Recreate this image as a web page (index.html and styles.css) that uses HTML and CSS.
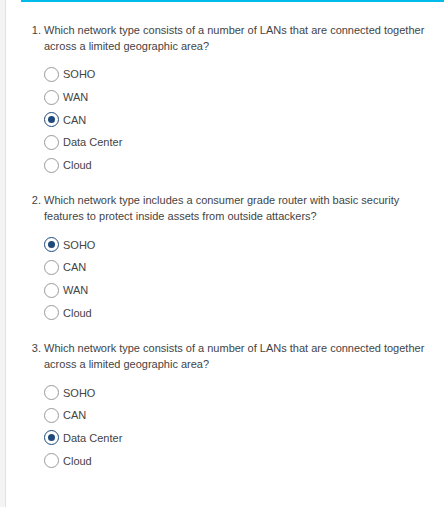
FILE: index.html
```html
<!DOCTYPE html>
<html>
<head>
<meta charset="utf-8">
<link rel="stylesheet" href="styles.css">
</head>
<body>
<div class="shell">
  <div class="rail"></div>
  <main class="panel">
    <ol class="quiz">
      <li class="question">
        <p class="prompt">Which network type consists of a number of LANs that are connected together across a limited geographic area?</p>
        <ul class="options">
          <li class="option"><span class="radio"></span>SOHO</li>
          <li class="option"><span class="radio"></span>WAN</li>
          <li class="option"><span class="radio checked"></span>CAN</li>
          <li class="option"><span class="radio"></span>Data Center</li>
          <li class="option"><span class="radio"></span>Cloud</li>
        </ul>
      </li>
      <li class="question">
        <p class="prompt">Which network type includes a consumer grade router with basic security features to protect inside assets from outside attackers?</p>
        <ul class="options">
          <li class="option"><span class="radio checked"></span>SOHO</li>
          <li class="option"><span class="radio"></span>CAN</li>
          <li class="option"><span class="radio"></span>WAN</li>
          <li class="option"><span class="radio"></span>Cloud</li>
        </ul>
      </li>
      <li class="question">
        <p class="prompt">Which network type consists of a number of LANs that are connected together across a limited geographic area?</p>
        <ul class="options">
          <li class="option"><span class="radio"></span>SOHO</li>
          <li class="option"><span class="radio"></span>CAN</li>
          <li class="option"><span class="radio checked"></span>Data Center</li>
          <li class="option"><span class="radio"></span>Cloud</li>
        </ul>
      </li>
    </ol>
  </main>
</div>
</body>
</html>
```

FILE: styles.css
```css
html, body {
  margin: 0;
  padding: 0;
  background: #ffffff;
}
body {
  font-family: "Liberation Sans", Arial, sans-serif;
  font-size: 11px;
  color: #444444;
}
.shell {
  display: flex;
  min-height: 507px;
}
.rail {
  width: 5px;
  background: #f4f4f4;
  border-right: 1px solid #e2e2e2;
  flex: none;
}
.panel {
  flex: 1;
  margin-left: 15px;
  border-top: 2px solid #00bceb;
}
.quiz {
  margin: 0;
  padding: 20px 12px 0 23px;
}
.question {
  margin-bottom: 16px;
}
.prompt {
  margin: 0;
  line-height: 16px;
}
.options {
  list-style: none;
  margin: 9px 0 0 0;
  padding: 0;
}
.option {
  display: flex;
  align-items: center;
  gap: 4px;
  height: 22.7px;
}
.radio {
  box-sizing: border-box;
  width: 15px;
  height: 15px;
  border: 1px solid #9a9a9a;
  border-radius: 50%;
  display: inline-flex;
  align-items: center;
  justify-content: center;
  flex: none;
}
.radio.checked {
  border: 1.5px solid #1d4a7a;
}
.radio.checked::after {
  content: "";
  width: 7px;
  height: 7px;
  border-radius: 50%;
  background: #1d4a7a;
}
```
